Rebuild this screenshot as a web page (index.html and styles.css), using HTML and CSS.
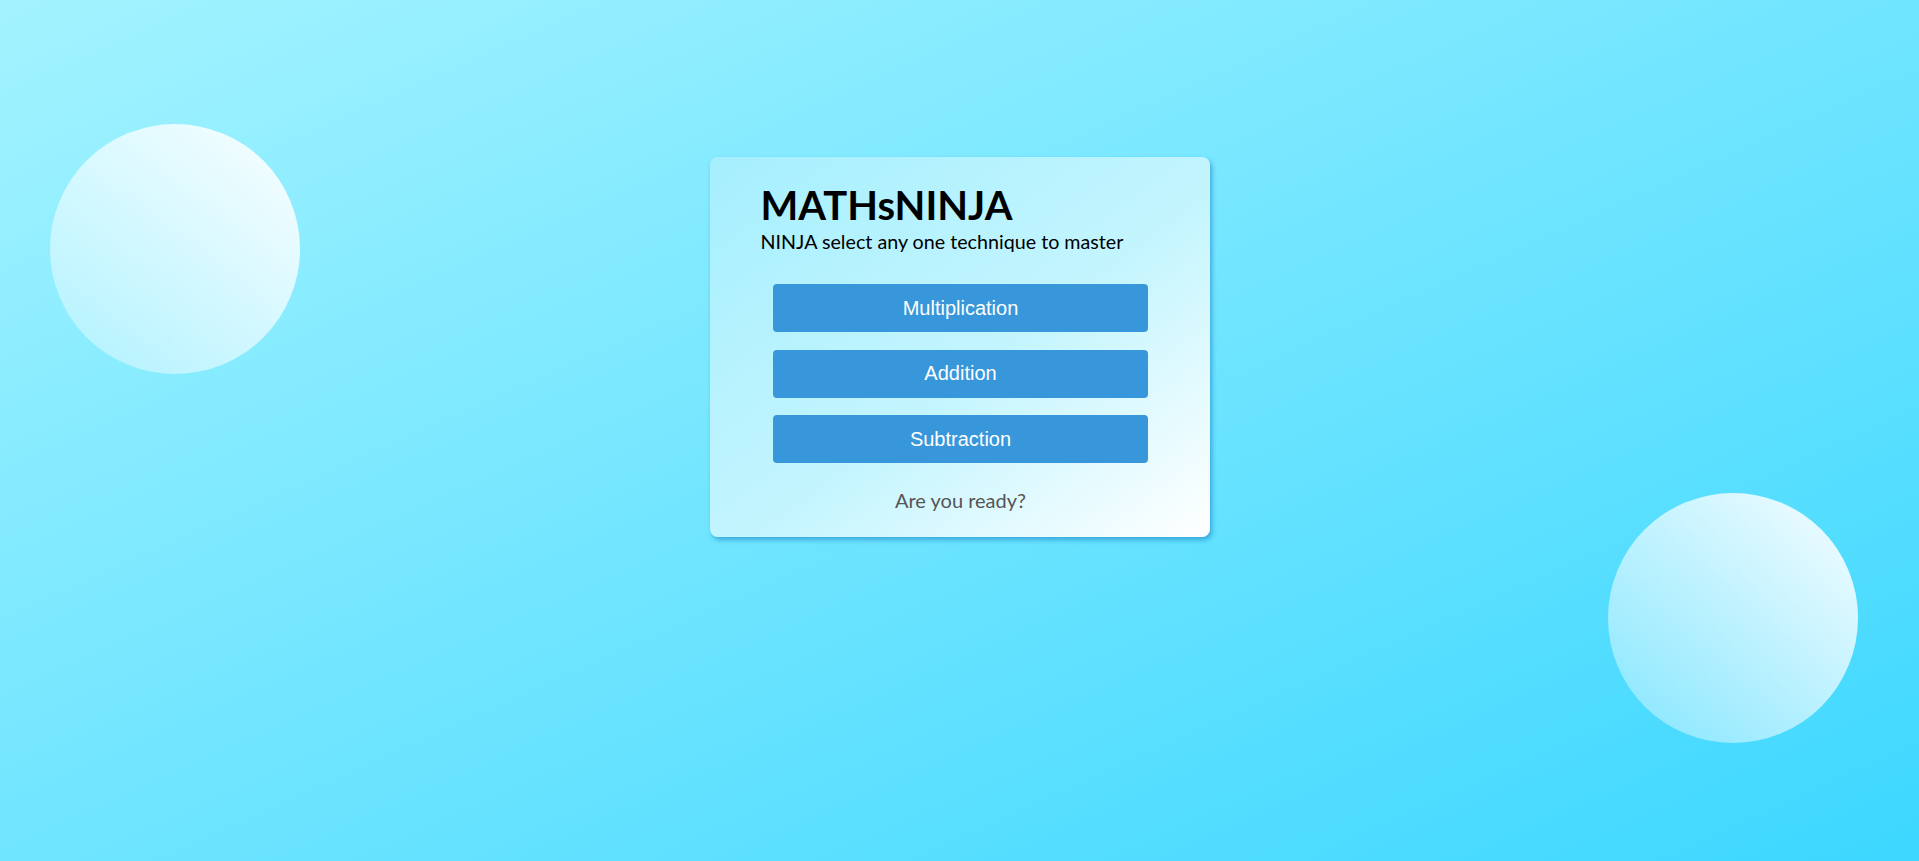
FILE: index.html
```html
<!DOCTYPE html>
<html lang="en">
<head>
<meta charset="utf-8">
<title>MATHsNINJA</title>
<link rel="stylesheet" href="styles.css">
</head>
<body>
<div class="bubble bubble-left"></div>
<div class="bubble bubble-right"></div>
<main class="card">
  <h1 class="title">MATHsNINJA</h1>
  <p class="subtitle">NINJA select any one technique to master</p>
  <div class="choices">
    <button class="choice">Multiplication</button>
    <button class="choice">Addition</button>
    <button class="choice">Subtraction</button>
  </div>
  <p class="ready">Are you ready?</p>
</main>
</body>
</html>
```

FILE: styles.css
```css
html, body {
  margin: 0;
  padding: 0;
}
body {
  min-height: 100vh;
  box-sizing: border-box;
  background: linear-gradient(to bottom right, #a3f3ff, #3dd7ff);
  font-family: Lato, "Noto Sans", sans-serif;
  display: flex;
  flex-direction: column;
  align-items: center;
  padding-top: 157px;
  position: relative;
  overflow: hidden;
}
.bubble {
  position: absolute;
  width: 250px;
  height: 250px;
  border-radius: 50%;
  background: linear-gradient(to top right, rgba(255,255,255,0.3), rgba(255,255,255,0.95));
}
.bubble-left {
  left: 50px;
  top: 124px;
}
.bubble-right {
  left: 1608px;
  top: 493px;
}
.card {
  position: relative;
  width: 500px;
  box-sizing: border-box;
  padding: 24px 51px 25px;
  border-radius: 8px;
  background: linear-gradient(to bottom right, #a6effe 0%, #c4f5fe 55%, #ffffff 100%);
  box-shadow: 2px 3px 5px rgba(20, 120, 190, 0.55);
}
.title {
  margin: 0;
  font-size: 40px;
  font-weight: 700;
  line-height: 48px;
  color: #000;
}
.subtitle {
  margin: 1px 0 0;
  font-size: 19.7px;
  line-height: 24px;
  color: #000;
}
.choices {
  display: flex;
  flex-direction: column;
  align-items: center;
  gap: 17.5px;
  margin-top: 30px;
}
.choice {
  width: 375px;
  height: 48px;
  border: none;
  border-radius: 4px;
  background: #3797da;
  color: #fff;
  font-family: "Liberation Sans", Arial, sans-serif;
  font-size: 20px;
  padding: 0;
  margin-left: 2px;
}
.ready {
  margin: 25px 0 0;
  text-align: center;
  font-size: 20px;
  line-height: 24px;
  color: #555;
  margin-left: 2px;
}
```
